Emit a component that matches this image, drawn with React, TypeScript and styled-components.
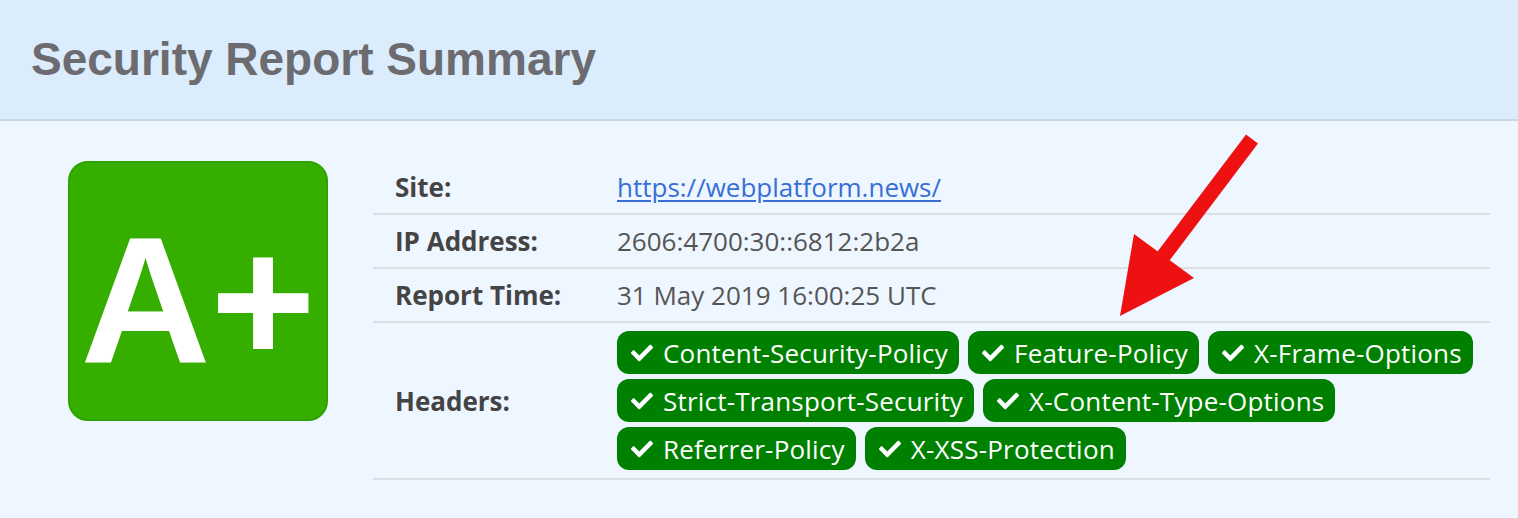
import styled, { createGlobalStyle } from "styled-components";
import { FaCheck } from "react-icons/fa";

const GlobalStyle = createGlobalStyle`
  html, body {
    margin: 0;
    padding: 0;
    background: #eef6ff;
  }
  * {
    box-sizing: border-box;
  }
`;

const Page = styled.div`
  position: relative;
  width: 1518px;
  height: 518px;
  overflow: hidden;
  background: #eef6ff;
`;

const Header = styled.header`
  background: #dbecfd;
  border-bottom: 2px solid #c8d7e0;
  padding: 33px 31px;
`;

const Title = styled.h1`
  margin: 0;
  font-family: "Liberation Sans", Arial, sans-serif;
  font-weight: 700;
  font-size: 46px;
  line-height: 53px;
  color: #6b6b70;
`;

const Body = styled.div`
  display: flex;
  align-items: flex-start;
  gap: 45px;
  padding: 40px 28px 0 68px;
`;

const Grade = styled.div`
  flex: none;
  width: 260px;
  height: 260px;
  border-radius: 20px;
  background: #35ae00;
  border: 2px solid #2ea300;
  display: flex;
  align-items: center;
  justify-content: center;
  padding-top: 20px;
  font-family: "Liberation Sans", Arial, sans-serif;
  font-weight: 700;
  font-size: 180px;
  line-height: 1;
  color: #fff;
`;

const Table = styled.div`
  flex: 1;
  display: grid;
  grid-template-columns: 244px 1fr;
  font-family: "Open Sans", "Noto Sans", sans-serif;
  font-size: 26px;
  line-height: 36px;
`;

const Label = styled.div`
  padding: 8px 0 8px 22px;
  font-weight: 700;
  color: #444;
  border-bottom: 2px solid #dcdfe3;
  display: flex;
  align-items: center;
`;

const Value = styled.div`
  padding: 8px 0;
  color: #555;
  border-bottom: 2px solid #dcdfe3;
`;

const Link = styled.a`
  color: #386ed6;
  text-decoration: underline;
  text-underline-offset: 3px;
`;

const Badges = styled.div`
  display: flex;
  flex-wrap: wrap;
  gap: 5px 9px;
`;

const Badge = styled.span`
  display: inline-flex;
  align-items: center;
  gap: 10px;
  height: 43px;
  padding: 0 11px 0 14px;
  border-radius: 12px;
  background: #008000;
  color: #fff;
  font-size: 26px;
  line-height: 36px;
  letter-spacing: 0.2px;

  svg {
    flex: none;
  }
`;

const Arrow = styled.svg`
  position: absolute;
  left: 0;
  top: 0;
  pointer-events: none;
`;

const headers = [
  "Content-Security-Policy",
  "Feature-Policy",
  "X-Frame-Options",
  "Strict-Transport-Security",
  "X-Content-Type-Options",
  "Referrer-Policy",
  "X-XSS-Protection",
];

const App = () => {
  return (
    <Page>
      <GlobalStyle />
      <Header>
        <Title>Security Report Summary</Title>
      </Header>
      <Body>
        <Grade>A+</Grade>
        <Table>
          <Label>Site:</Label>
          <Value>
            <Link href="#">https://webplatform.news/</Link>
          </Value>
          <Label>IP Address:</Label>
          <Value>2606:4700:30::6812:2b2a</Value>
          <Label>Report Time:</Label>
          <Value>31 May 2019 16:00:25 UTC</Value>
          <Label>Headers:</Label>
          <Value>
            <Badges>
              {headers.map((h) => (
                <Badge key={h}>
                  <FaCheck size={22} />
                  {h}
                </Badge>
              ))}
            </Badges>
          </Value>
        </Table>
      </Body>
      <Arrow width="1518" height="518" viewBox="0 0 1518 518">
        <line x1="1252" y1="139" x2="1156" y2="266" stroke="#ee1111" strokeWidth="15" />
        <polygon points="1134,234 1194,278 1120,316" fill="#ee1111" />
      </Arrow>
    </Page>
  );
};

export default App;
